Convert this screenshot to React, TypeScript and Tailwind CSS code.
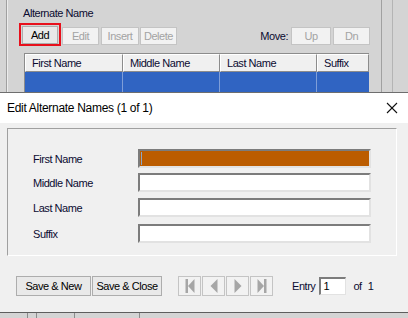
import React from "react";

interface BtnProps {
  label?: string;
  disabled?: boolean;
  className?: string;
  children?: React.ReactNode;
}

// classic windows push button
const WinButton: React.FC<BtnProps> = ({ label, disabled, className, children }) => (
  <div
    className={
      "flex items-center justify-center border bg-[#e9e9e9] " +
      (disabled ? "border-[#c4c4c4] text-[#a3a3a3] bg-[#f2f2f2] " : "border-[#adadad] text-black ") +
      (className ?? "")
    }
  >
    {children ?? label}
  </div>
);

const NavIcon: React.FC<{ kind: "first" | "prev" | "next" | "last" }> = ({ kind }) => (
  <svg width="12" height="16" viewBox="0 0 12 16" fill="#a6a6a6">
    {kind === "first" && (
      <>
        <rect x="1.5" y="1" width="2.5" height="14" />
        <polygon points="10.5,1 4,8 10.5,15" />
      </>
    )}
    {kind === "prev" && <polygon points="9.5,1 2.5,8 9.5,15" />}
    {kind === "next" && <polygon points="2.5,1 9.5,8 2.5,15" />}
    {kind === "last" && (
      <>
        <polygon points="1.5,1 8,8 1.5,15" />
        <rect x="8" y="1" width="2.5" height="14" />
      </>
    )}
  </svg>
);

const Field: React.FC<{ label: string; active?: boolean; className?: string }> = ({ label, active, className }) => (
  <div className={"flex items-center h-[19px] " + (className ?? "")}>
    <div className="w-[105px] text-[#0b0b30]">{label}</div>
    <div
      className={
        "w-[233px] h-[19px] border-t-2 border-l-2 border-t-[#7c7c7c] border-l-[#7c7c7c] border-b-2 border-r-2 border-b-[#e2e2e2] border-r-[#e2e2e2] flex items-center " +
        (active ? "bg-[#bb5c00]" : "bg-white")
      }
    >
      {active && <div className="ml-[1px] w-[1px] h-[13px] bg-[#8aa7c9]" />}
    </div>
  </div>
);

export default function App() {
  const font = { fontFamily: '"Liberation Sans", Arial, sans-serif' };
  return (
    <div className="w-[408px] h-[318px] overflow-hidden text-[11px] tracking-[-0.45px] leading-[14px]" style={font}>
      {/* underlying window */}
      <div className="h-[92px] flex bg-[#d4d4d4] overflow-hidden">
        <div className="w-[6px]" />
        <div className="w-[1px] bg-[#a0a0a0]" />
        <div className="w-[1px] bg-[#ececec]" />
        <div className="w-[373px] flex flex-col">
          <div className="ml-[15px] mt-[6px] text-[#0b0b30]">Alternate Name</div>
          <div className="flex mt-[3px] h-[23px] pl-[11px] pr-[11px]">
            <div className="w-[42px] h-[23px] border-2 border-[#e8101c] flex items-center justify-center">
              <WinButton label="Add" className="w-[36px] h-[18px]" />
            </div>
            <WinButton label="Edit" disabled className="ml-[1px] w-[37px] h-[18px] self-end mb-[1px]" />
            <WinButton label="Insert" disabled className="ml-[2px] w-[38px] h-[18px] self-end mb-[1px]" />
            <WinButton label="Delete" disabled className="ml-[1px] w-[37px] h-[18px] self-end mb-[1px]" />
            <div className="ml-auto self-end mb-[3px] mr-[3px] text-[#0b0b30]">Move:</div>
            <WinButton label="Up" disabled className="w-[40px] h-[18px] self-end mb-[1px]" />
            <WinButton label="Dn" disabled className="ml-[2px] w-[37px] h-[18px] self-end mb-[1px]" />
          </div>
          <div className="ml-[16px] mt-[7px] w-[345px] border-l border-t border-[#8c8c8c] bg-white">
            <div className="flex h-[18px] bg-[#f0f0f0] text-[#0b0b30]">
              {[
                ["First Name", "w-[98px]"],
                ["Middle Name", "w-[97px]"],
                ["Last Name", "w-[97px]"],
                ["Suffix", "flex-1"],
              ].map(([t, w]) => (
                <div
                  key={t}
                  className={w + " pl-[6px] flex items-center border-r border-b border-r-[#8c8c8c] border-b-[#8c8c8c] border-l border-l-white border-t border-t-white"}
                >
                  {t}
                </div>
              ))}
            </div>
            <div className="flex h-[20px] bg-[#3064c2]">
              <div className="w-[98px] border-r border-[#7f9ed8]" />
              <div className="w-[97px] border-r border-[#7f9ed8]" />
              <div className="w-[97px] border-r border-[#7f9ed8]" />
              <div className="flex-1" />
            </div>
          </div>
        </div>
        <div className="w-[1px] bg-[#a0a0a0]" />
        <div className="w-[10px]" />
        <div className="w-[1px] bg-[#b4b4b4]" />
        <div className="flex-1" />
      </div>

      {/* dialog */}
      <div className="h-[1px] bg-[#6e6e6e]" />
      <div className="h-[30px] bg-white flex items-center pl-[7px] pr-[10px] text-[12px] tracking-[-0.3px] text-black">
        <span>Edit Alternate Names (1 of 1)</span>
        <svg className="ml-auto" width="12" height="12" viewBox="0 0 12 12" stroke="#111" strokeWidth="1.1">
          <line x1="1" y1="1" x2="11" y2="11" />
          <line x1="11" y1="1" x2="1" y2="11" />
        </svg>
      </div>
      <div className="h-[189px] bg-[#f0f0f0] flex flex-col">
        <div className="mt-[5px] ml-[7px] w-[390px] h-[128px] border border-t-[#a0a0a0] border-l-[#a0a0a0] border-r-white border-b-white pl-[25px] pt-[20px]">
          <Field label="First Name" active />
          <Field label="Middle Name" className="mt-[5px]" />
          <Field label="Last Name" className="mt-[6px]" />
          <Field label="Suffix" className="mt-[7px]" />
        </div>
        <div className="flex items-center mt-[20px] pl-[16px] h-[20px]">
          <WinButton label="Save & New" className="w-[75px] h-[20px]" />
          <WinButton label="Save & Close" className="ml-[1px] w-[70px] h-[20px]" />
          <div className="ml-[16px] flex gap-[1px]">
            <WinButton disabled className="w-[23px] h-[20px]"><NavIcon kind="first" /></WinButton>
            <WinButton disabled className="w-[23px] h-[20px]"><NavIcon kind="prev" /></WinButton>
            <WinButton disabled className="w-[23px] h-[20px]"><NavIcon kind="next" /></WinButton>
            <WinButton disabled className="w-[23px] h-[20px]"><NavIcon kind="last" /></WinButton>
          </div>
          <div className="ml-[19px] text-[#0b0b30]">Entry</div>
          <div className="ml-[4px] w-[27px] h-[18px] bg-white border-t-2 border-l-2 border-[#7c7c7c] border-b border-r border-b-[#e2e2e2] border-r-[#e2e2e2] pl-[2px] leading-[14px] text-black">
            1
          </div>
          <div className="ml-[7px] text-[#0b0b30]">of</div>
          <div className="ml-[6px] text-[#0b0b30]">1</div>
        </div>
      </div>
      {/* bottom of parent window */}
      <div className="h-[1px] bg-[#5e5e5e]" />
      <div className="h-[5px] bg-[#d4d4d4] flex">
        <div className="w-[28px] border-r border-[#8c8c8c]" />
        <div className="w-[9px] border-r border-[#8c8c8c]" />
        <div className="w-[38px] border-r border-[#8c8c8c]" />
        <div className="w-[65px] border-r border-[#8c8c8c]" />
        <div className="flex-1" />
      </div>
    </div>
  );
}
